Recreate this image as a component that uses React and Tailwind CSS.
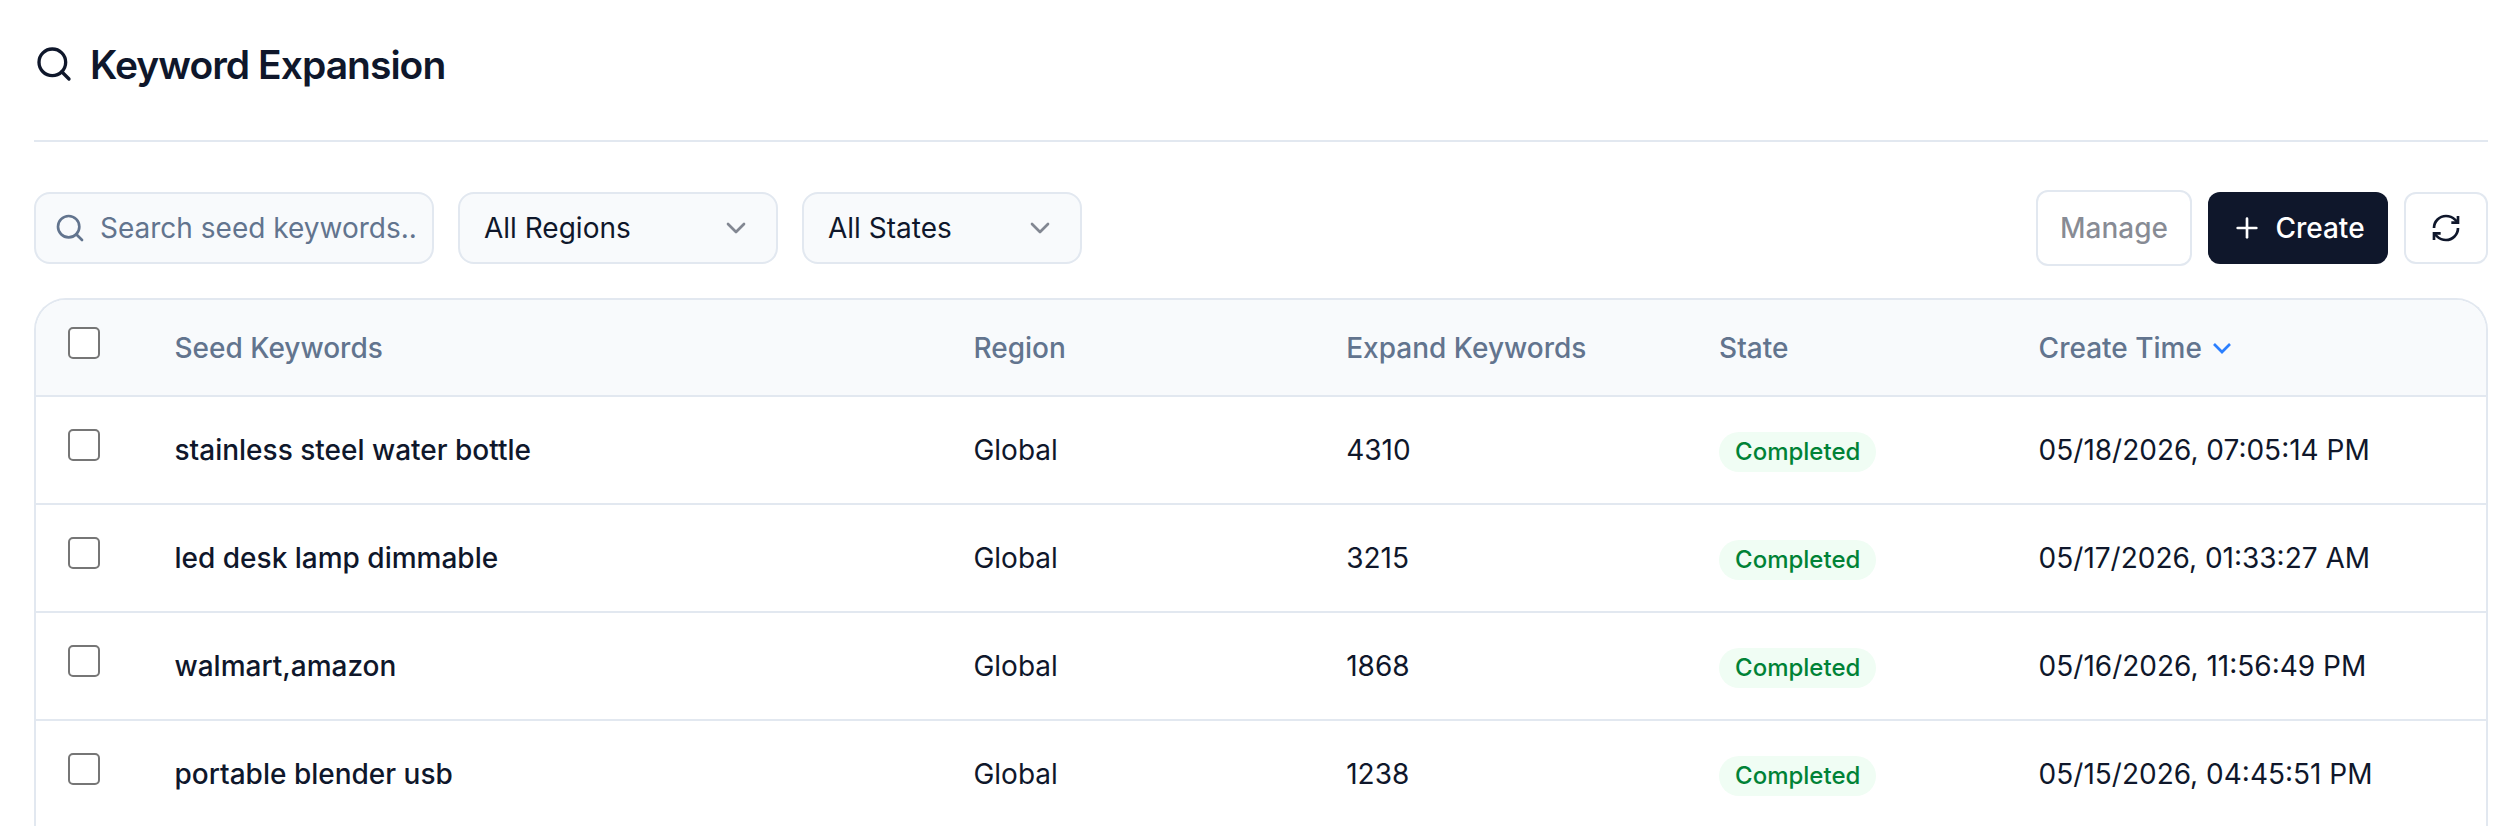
import React, { useState } from "react";
import { ChevronDown, Plus, RefreshCw, Search } from "lucide-react";

const tasks = [
  { id: 1, keywords: "stainless steel water bottle", region: "Global", expanded: 4310, state: "Completed", createTime: "05/18/2026, 07:05:14 PM" },
  { id: 2, keywords: "led desk lamp dimmable", region: "Global", expanded: 3215, state: "Completed", createTime: "05/17/2026, 01:33:27 AM" },
  { id: 3, keywords: "walmart,amazon", region: "Global", expanded: 1868, state: "Completed", createTime: "05/16/2026, 11:56:49 PM" },
  { id: 4, keywords: "portable blender usb", region: "Global", expanded: 1238, state: "Completed", createTime: "05/15/2026, 04:45:51 PM" },
];

const FilterSelect = ({ label, className, value, onChange, options }) => (
  <div className={`relative ${className}`}>
    <select
      aria-label={label}
      value={value}
      onChange={(e) => onChange(e.target.value)}
      className="h-[72px] w-full appearance-none rounded-2xl border-2 border-slate-200 bg-slate-50 pl-6 pr-16 text-slate-900"
    >
      {options.map((option) => (
        <option key={option} value={option}>{option}</option>
      ))}
    </select>
    <ChevronDown className="pointer-events-none absolute right-[26px] top-5 size-8 opacity-50" />
  </div>
);

const Checkbox = ({ label, checked, onChange }) => (
  <input
    type="checkbox"
    aria-label={label}
    checked={checked}
    onChange={onChange}
    className="block size-8 appearance-none rounded-[5px] border-2 border-[#767676] bg-white checked:bg-slate-900"
  />
);

const App = () => {
  const [search, setSearch] = useState("");
  const [region, setRegion] = useState("All Regions");
  const [state, setState] = useState("All States");
  const [selected, setSelected] = useState([]);

  const rows = tasks.filter(
    (task) =>
      task.keywords.includes(search.toLowerCase()) &&
      (region === "All Regions" || task.region === region) &&
      (state === "All States" || task.state === state)
  );

  const toggle = (id) =>
    setSelected(selected.includes(id) ? selected.filter((x) => x !== id) : [...selected, id]);

  const toggleAll = () =>
    setSelected(selected.length === tasks.length ? [] : tasks.map((task) => task.id));

  return (
    <div className="bg-white pl-[34px] pr-8 font-['Inter',sans-serif] text-[28px] leading-10 text-slate-900">
      <header className="flex h-[142px] items-start gap-4 border-b-2 border-slate-200 pt-10">
        <Search className="mt-1 size-10" />
        <h1 className="text-[39px] font-semibold leading-[50px] tracking-tight">Keyword Expansion</h1>
      </header>

      <div className="flex items-center justify-between pb-8 pt-12">
        <div className="flex gap-6">
          <div className="relative w-[400px]">
            <Search className="pointer-events-none absolute left-5 top-5 size-8 text-slate-500" />
            <input
              type="text"
              aria-label="Search seed keywords"
              placeholder="Search seed keywords..."
              value={search}
              onChange={(e) => setSearch(e.target.value)}
              className="h-[72px] w-full rounded-2xl border-2 border-slate-200 bg-slate-50 pl-16 pr-4 placeholder:text-slate-500"
            />
          </div>
          <FilterSelect
            label="Region"
            className="w-80"
            value={region}
            onChange={setRegion}
            options={["All Regions", "Global"]}
          />
          <FilterSelect
            label="State"
            className="w-[280px]"
            value={state}
            onChange={setState}
            options={["All States", "Completed"]}
          />
        </div>

        <div className="flex items-center gap-4 font-medium">
          <button
            type="button"
            disabled
            className="h-[76px] w-[156px] rounded-xl border-2 border-slate-200 text-slate-900/50"
          >
            Manage
          </button>
          <button
            type="button"
            className="flex h-[72px] w-[180px] items-center justify-center gap-3 rounded-xl bg-slate-900 text-white"
          >
            <Plus className="size-8" />
            Create
          </button>
          <button
            type="button"
            aria-label="Refresh"
            className="flex h-[72px] w-[84px] items-center justify-center rounded-xl border-2 border-slate-200"
          >
            <RefreshCw className="size-8" strokeLinecap="butt" strokeLinejoin="miter" />
          </button>
        </div>
      </div>

      <div className="overflow-hidden rounded-t-[32px] border-2 border-b-0 border-slate-200">
        <table className="w-full table-fixed border-separate border-spacing-0 text-left">
          <colgroup>
            <col className="w-[80px]" />
            <col className="w-[600px]" />
            <col className="w-[280px]" />
            <col className="w-[280px]" />
            <col className="w-[240px]" />
            <col className="w-[360px]" />
          </colgroup>
          <thead className="bg-slate-50 text-slate-500">
            <tr className="*:h-[97px] *:border-b-2 *:border-slate-200 *:px-8 *:font-medium">
              <th className="pb-[10px]">
                <Checkbox label="Select all" checked={selected.length === tasks.length} onChange={toggleAll} />
              </th>
              <th>Seed Keywords</th>
              <th>Region</th>
              <th>Expand Keywords</th>
              <th>State</th>
              <th>
                <button type="button" className="flex items-center gap-1">
                  Create Time
                  <ChevronDown className="size-8 text-blue-500" strokeLinecap="butt" strokeLinejoin="miter" />
                </button>
              </th>
            </tr>
          </thead>
          <tbody>
            {rows.map((task) => (
              <tr key={task.id} className="*:h-[108px] *:border-b-2 *:border-slate-200 *:px-8">
                <td className="pb-[10px]">
                  <Checkbox
                    label={`Select ${task.keywords}`}
                    checked={selected.includes(task.id)}
                    onChange={() => toggle(task.id)}
                  />
                </td>
                <td className="font-medium">{task.keywords}</td>
                <td>{task.region}</td>
                <td>{task.expanded}</td>
                <td className="pt-1">
                  <span className="flex h-10 w-fit items-center rounded-full bg-green-50 px-4 text-2xl font-medium text-green-700">
                    {task.state}
                  </span>
                </td>
                <td>{task.createTime}</td>
              </tr>
            ))}
          </tbody>
        </table>
      </div>
    </div>
  );
};

export default App;
